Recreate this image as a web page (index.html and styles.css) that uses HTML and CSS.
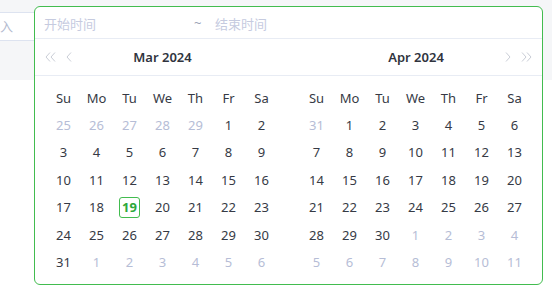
FILE: index.html
```html
<!DOCTYPE html>
<html lang="zh-CN">
<head>
    <meta charset="UTF-8">
    <title>日期范围选择</title>
    <link rel="stylesheet" href="styles.css">
</head>
<body>
    <div class="toolbar">
        <div class="search-input">入</div>
    </div>

    <!-- Range picker dropdown -->
    <div class="picker">
        <div class="picker-inputs">
            <span class="field field-start">开始时间</span>
            <span class="tilde">~</span>
            <span class="field">结束时间</span>
        </div>

        <div class="picker-panes">
            <div class="pane">
                <div class="pane-header">
                    <div class="nav nav-left">
                        <svg width="11" height="10" viewBox="0 0 11 10"><path d="M5 0.5L1 5l4 4.5M10 0.5L6 5l4 4.5" fill="none" stroke="#c9cdd6" stroke-width="1"/></svg>
                        <svg width="6" height="10" viewBox="0 0 6 10"><path d="M5 0.5L1 5l4 4.5" fill="none" stroke="#c9cdd6" stroke-width="1"/></svg>
                    </div>
                    <div class="title">Mar 2024</div>
                    <div></div>
                </div>
                <div class="days" id="marDays"></div>
            </div>

            <div class="pane">
                <div class="pane-header">
                    <div></div>
                    <div class="title">Apr 2024</div>
                    <div class="nav nav-right">
                        <svg width="6" height="10" viewBox="0 0 6 10"><path d="M1 0.5L5 5l-4 4.5" fill="none" stroke="#c9cdd6" stroke-width="1"/></svg>
                        <svg width="11" height="10" viewBox="0 0 11 10"><path d="M1 0.5L5 5l-4 4.5M6 0.5L10 5l-4 4.5" fill="none" stroke="#c9cdd6" stroke-width="1"/></svg>
                    </div>
                </div>
                <div class="days" id="aprDays"></div>
            </div>
        </div>
    </div>

    <script>
        const weekdays = ['Su', 'Mo', 'Tu', 'We', 'Th', 'Fr', 'Sa'];

        // Fill a 6-week grid for a month
        function renderMonth(el, year, month, today) {
            weekdays.forEach(w => {
                const d = document.createElement('div');
                d.className = 'cell head';
                d.textContent = w;
                el.appendChild(d);
            });
            const first = new Date(year, month, 1);
            const start = new Date(year, month, 1 - first.getDay());
            for (let i = 0; i < 42; i++) {
                const date = new Date(start.getFullYear(), start.getMonth(), start.getDate() + i);
                const cell = document.createElement('div');
                cell.className = 'cell';
                if (date.getMonth() !== month) cell.classList.add('other');
                const inner = document.createElement('span');
                inner.className = 'num';
                if (date.getMonth() === month && date.getDate() === today) inner.classList.add('today');
                inner.textContent = date.getDate();
                cell.appendChild(inner);
                el.appendChild(cell);
            }
        }

        renderMonth(document.getElementById('marDays'), 2024, 2, 19);
        renderMonth(document.getElementById('aprDays'), 2024, 3, 0);
    </script>
</body>
</html>
```

FILE: styles.css
```css
* {
    margin: 0;
    padding: 0;
    box-sizing: border-box;
}

body {
    width: 552px;
    height: 308px;
    background: #fff;
    font-family: "Noto Sans", "Noto Sans CJK SC", sans-serif;
    font-size: 13px;
    color: #363a45;
    position: relative;
    overflow: hidden;
}

.toolbar {
    height: 80px;
    background: #f5f6f8;
    padding-top: 12px;
}

.search-input {
    width: 120px;
    height: 29px;
    background: #fff;
    border: 1px solid #dde3f0;
    border-left: none;
    color: #b4bbd0;
    line-height: 27px;
    font-size: 13px;
}

/* Dropdown */
.picker {
    position: absolute;
    left: 34px;
    top: 6px;
    width: 509px;
    height: 279px;
    background: #fff;
    border: 1px solid #42bc4f;
    border-radius: 6px;
}

.picker-inputs {
    height: 32px;
    display: flex;
    align-items: center;
    padding: 1px 0 0 9px;
    border-bottom: 1px solid #e8ecf4;
    color: #c6cbdf;
}

.field-start {
    width: 150px;
}

.tilde {
    width: 21px;
    color: #9aa1b5;
}

.picker-panes {
    display: flex;
    gap: 22px;
    padding: 0 11px 0 12px;
}

.pane {
    width: 231px;
}

.pane-header {
    height: 37px;
    display: grid;
    grid-template-columns: 1fr auto 1fr;
    align-items: center;
    border-bottom: 1px solid #e8ecf4;
    margin: 0 -12px;
    padding: 0 10px;
}

.pane + .pane .pane-header {
    margin: 0 -11px 0 -11px;
    padding: 0 10px 0 11px;
}

.title {
    font-weight: 600;
    color: #30343e;
    font-size: 13px;
}

.nav {
    display: flex;
    align-items: center;
    gap: 10px;
}

.nav svg {
    display: block;
}

.nav-right {
    justify-content: flex-end;
}

.days {
    display: grid;
    grid-template-columns: repeat(7, 33px);
    grid-auto-rows: 27.4px;
    padding-top: 8px;
}

.cell {
    display: flex;
    align-items: center;
    justify-content: center;
}

.cell.other {
    color: #b6bdd6;
}

.num {
    width: 21px;
    height: 21px;
    display: flex;
    align-items: center;
    justify-content: center;
    border-radius: 3px;
}

.num.today {
    border: 1px solid #42bc4f;
    color: #2ea83c;
    font-weight: 700;
}
```
